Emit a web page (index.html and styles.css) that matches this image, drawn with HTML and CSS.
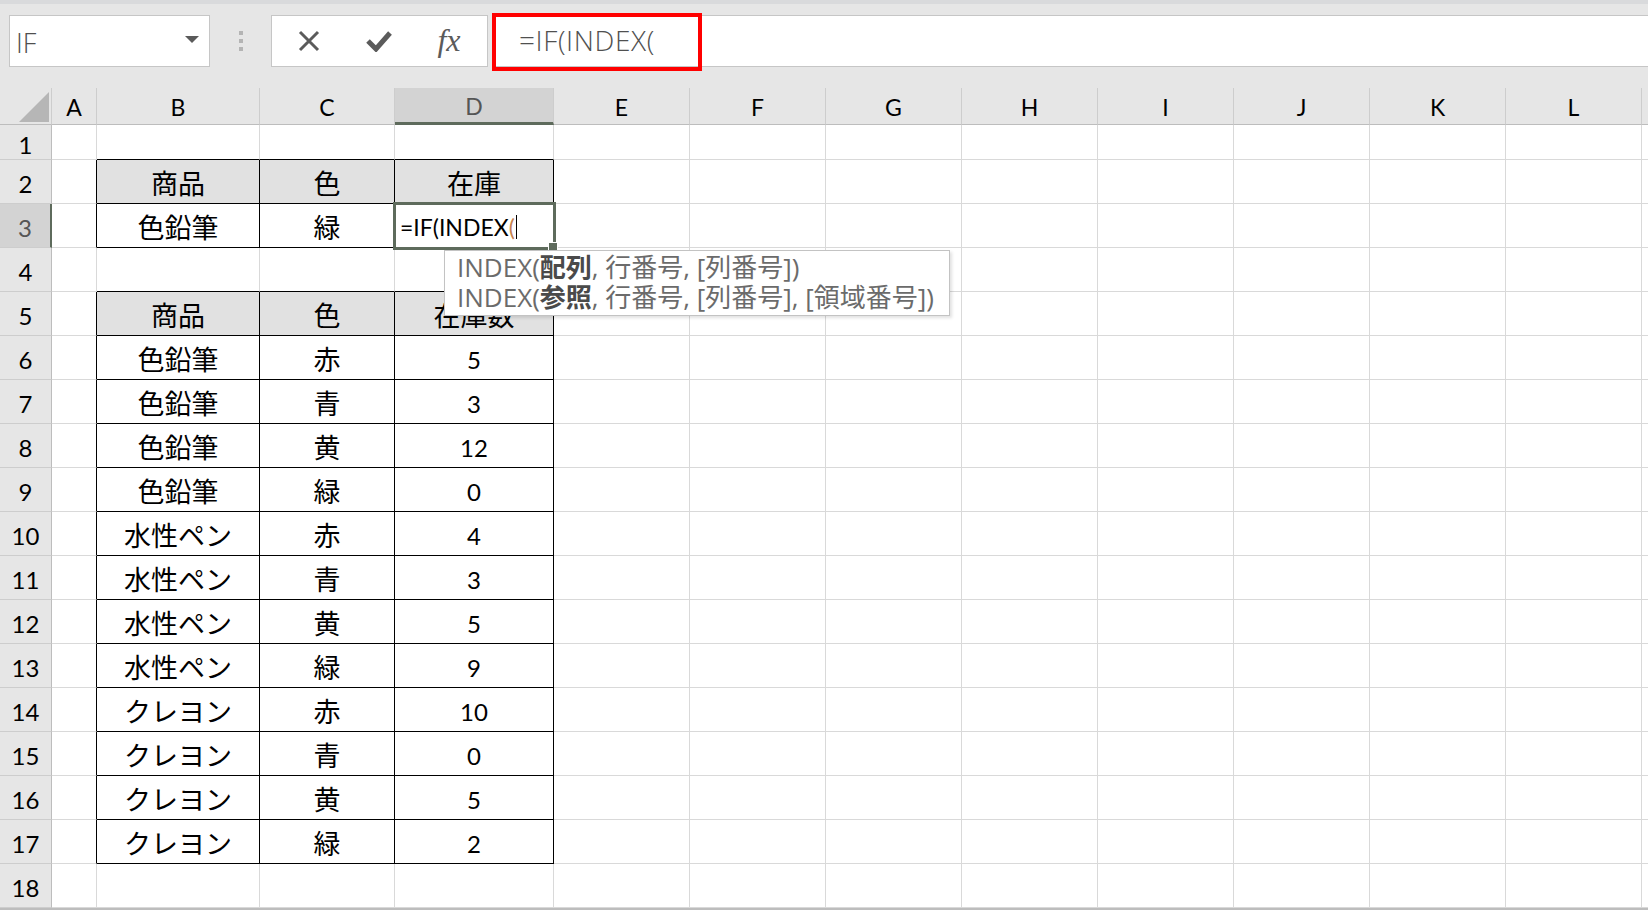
FILE: index.html
```html
<!DOCTYPE html>
<html lang="ja">

<head>
    <meta charset="UTF-8">
    <title>在庫表 - INDEX</title>
    <link rel="stylesheet" href="styles.css">
</head>

<body>
    <div class="top-strip"></div>

    <!-- name box + formula bar -->
    <div class="formula-row">
        <div class="name-box">
            <span>IF</span>
            <span class="arrow"></span>
        </div>
        <div class="grip"><span></span><span></span><span></span></div>
        <div class="fx-buttons">
            <div class="btn">
                <svg width="24" height="22" viewBox="0 0 24 22"><path d="M3 2 L21 20 M21 2 L3 20" stroke="#5b5b5b" stroke-width="3" fill="none"/></svg>
            </div>
            <div class="btn">
                <svg width="28" height="22" viewBox="0 0 28 22"><path d="M3 11 L11 19 L25 3" stroke="#5b5b5b" stroke-width="5" fill="none"/></svg>
            </div>
            <div class="btn fx">fx</div>
        </div>
        <div class="formula-input">
            =IF(INDEX(
            <div class="callout"></div>
        </div>
    </div>

    <!-- sheet grid: row header, A..L, then the cut-off M column -->
    <div class="sheet">
        <div class="hd corner"><svg width="30" height="30" viewBox="0 0 30 30"><path d="M30 0 L30 30 L0 30 Z" fill="#b6b6b6"/></svg></div>
        <div class="hd">A</div><div class="hd">B</div><div class="hd">C</div><div class="hd sel-col">D</div><div class="hd">E</div><div class="hd">F</div><div class="hd">G</div><div class="hd">H</div><div class="hd">I</div><div class="hd">J</div><div class="hd">K</div><div class="hd">L</div><div class="hd last"></div>

        <div class="rn">1</div><div></div><div class="bt"></div><div class="bt"></div><div class="bt"></div><div></div><div></div><div></div><div></div><div></div><div></div><div></div><div></div><div class="last"></div>

        <div class="rn">2</div><div class="bl"></div><div class="k kh jp">商品</div><div class="k kh jp">色</div><div class="k kh jp">在庫</div><div></div><div></div><div></div><div></div><div></div><div></div><div></div><div></div><div class="last"></div>

        <div class="rn sel-row">3</div><div class="bl"></div><div class="k jp">色鉛筆</div><div class="k jp">緑</div><div class="k active">=IF(INDEX<span class="paren">(</span><span class="caret"></span></div><div></div><div></div><div></div><div></div><div></div><div></div><div></div><div></div><div class="last"></div>

        <div class="rn">4</div><div></div><div class="bt"></div><div class="bt"></div><div class="bt"></div><div></div><div></div><div></div><div></div><div></div><div></div><div></div><div></div><div class="last"></div>

        <div class="rn">5</div><div class="bl"></div><div class="k kh jp">商品</div><div class="k kh jp">色</div><div class="k kh jp">在庫数</div><div></div><div></div><div></div><div></div><div></div><div></div><div></div><div></div><div class="last"></div>

        <div class="rn">6</div><div class="bl"></div><div class="k jp">色鉛筆</div><div class="k jp">赤</div><div class="k">5</div><div></div><div></div><div></div><div></div><div></div><div></div><div></div><div></div><div class="last"></div>
        <div class="rn">7</div><div class="bl"></div><div class="k jp">色鉛筆</div><div class="k jp">青</div><div class="k">3</div><div></div><div></div><div></div><div></div><div></div><div></div><div></div><div></div><div class="last"></div>
        <div class="rn">8</div><div class="bl"></div><div class="k jp">色鉛筆</div><div class="k jp">黄</div><div class="k">12</div><div></div><div></div><div></div><div></div><div></div><div></div><div></div><div></div><div class="last"></div>
        <div class="rn">9</div><div class="bl"></div><div class="k jp">色鉛筆</div><div class="k jp">緑</div><div class="k">0</div><div></div><div></div><div></div><div></div><div></div><div></div><div></div><div></div><div class="last"></div>
        <div class="rn">10</div><div class="bl"></div><div class="k jp">水性ペン</div><div class="k jp">赤</div><div class="k">4</div><div></div><div></div><div></div><div></div><div></div><div></div><div></div><div></div><div class="last"></div>
        <div class="rn">11</div><div class="bl"></div><div class="k jp">水性ペン</div><div class="k jp">青</div><div class="k">3</div><div></div><div></div><div></div><div></div><div></div><div></div><div></div><div></div><div class="last"></div>
        <div class="rn">12</div><div class="bl"></div><div class="k jp">水性ペン</div><div class="k jp">黄</div><div class="k">5</div><div></div><div></div><div></div><div></div><div></div><div></div><div></div><div></div><div class="last"></div>
        <div class="rn">13</div><div class="bl"></div><div class="k jp">水性ペン</div><div class="k jp">緑</div><div class="k">9</div><div></div><div></div><div></div><div></div><div></div><div></div><div></div><div></div><div class="last"></div>
        <div class="rn">14</div><div class="bl"></div><div class="k jp">クレヨン</div><div class="k jp">赤</div><div class="k">10</div><div></div><div></div><div></div><div></div><div></div><div></div><div></div><div></div><div class="last"></div>
        <div class="rn">15</div><div class="bl"></div><div class="k jp">クレヨン</div><div class="k jp">青</div><div class="k">0</div><div></div><div></div><div></div><div></div><div></div><div></div><div></div><div></div><div class="last"></div>
        <div class="rn">16</div><div class="bl"></div><div class="k jp">クレヨン</div><div class="k jp">黄</div><div class="k">5</div><div></div><div></div><div></div><div></div><div></div><div></div><div></div><div></div><div class="last"></div>
        <div class="rn">17</div><div class="bl"></div><div class="k jp">クレヨン</div><div class="k jp">緑</div><div class="k">2</div><div></div><div></div><div></div><div></div><div></div><div></div><div></div><div></div><div class="last"></div>

        <div class="rn">18</div><div></div><div></div><div></div><div></div><div></div><div></div><div></div><div></div><div></div><div></div><div></div><div></div><div class="last"></div>

        <!-- function argument hint under the edited cell -->
        <aside class="hint">
            <p>INDEX(<b>配列</b>, 行番号, [列番号])</p>
            <p>INDEX(<b>参照</b>, 行番号, [列番号], [領域番号])</p>
        </aside>
    </div>
</body>

</html>
```

FILE: styles.css
```css
* {
    box-sizing: border-box;
}

html,
body {
    margin: 0;
}

body {
    width: 1648px;
    height: 910px;
    overflow: hidden;
    background-color: #e6e6e6;
    font-family: Lato, "Noto Sans CJK JP", sans-serif;
}

.top-strip {
    height: 4px;
    background-color: #d9dadc;
}

/* formula bar */
.formula-row {
    display: flex;
    align-items: flex-start;
    height: 84px;
    padding: 11px 0 0 9px;
}

.name-box {
    width: 201px;
    height: 52px;
    background-color: #fff;
    border: 1px solid #c6c6c6;
    display: flex;
    align-items: center;
    justify-content: space-between;
    padding: 3px 10px 0 6px;
    font-family: "Open Sans", sans-serif;
    font-weight: 300;
    font-size: 27px;
    color: #4f4f4f;
}

.name-box .arrow {
    width: 0;
    height: 0;
    border-left: 7px solid transparent;
    border-right: 7px solid transparent;
    border-top: 7px solid #5a5a5a;
    margin-bottom: 6px;
}

.grip {
    width: 61px;
    height: 52px;
    display: flex;
    flex-direction: column;
    align-items: center;
    justify-content: center;
    gap: 4px;
}

.grip span {
    width: 4px;
    height: 4px;
    background-color: #b4b4b4;
}

.fx-buttons {
    width: 217px;
    height: 52px;
    background-color: #fff;
    border: 1px solid #c6c6c6;
    display: flex;
    align-items: center;
    padding-left: 2px;
}

.btn {
    width: 70px;
    display: flex;
    justify-content: center;
    align-items: center;
}

.btn.fx {
    font-family: "Liberation Serif", serif;
    font-style: italic;
    font-size: 32px;
    color: #5b5b5b;
    padding-bottom: 2px;
}

.formula-input {
    flex: 1;
    margin-left: 4px;
    height: 52px;
    position: relative;
    background-color: #fff;
    border-top: 1px solid #c6c6c6;
    border-bottom: 1px solid #c6c6c6;
    display: flex;
    align-items: center;
    padding: 0 0 3px 27px;
    font-family: "Open Sans", sans-serif;
    font-weight: 300;
    font-size: 28px;
    letter-spacing: 0.6px;
    color: #505050;
}

.callout {
    position: absolute;
    left: 0;
    top: -3px;
    width: 210px;
    height: 58px;
    border: 4px solid #ff0000;
}

/* sheet */
.sheet {
    position: relative;
    display: grid;
    grid-template-columns: 52px 45px 163px 135px 159px repeat(8, 136px) 1fr;
    grid-template-rows: 37px 35px;
    grid-auto-rows: 44px;
    background-color: #fff;
    border-bottom: 2px solid #bdbdbd;
}

.sheet > div {
    display: flex;
    align-items: center;
    justify-content: center;
    border-right: 1px solid #d9d9d9;
    border-bottom: 1px solid #d9d9d9;
    font-size: 24px;
    color: #000;
    padding-top: 4px;
}

.sheet > .last {
    border-right: none;
}

.sheet > .hd {
    background-color: #e6e6e6;
    border-right-color: #cdcdcd;
    border-bottom-color: #bdbdbd;
    font-size: 23px;
    padding-top: 2px;
}

.sheet > .corner {
    align-items: flex-end;
    justify-content: flex-end;
    padding: 0 2px 2px 0;
}

.sheet > .rn {
    background-color: #e6e6e6;
    border-right-color: #bdbdbd;
    border-bottom-color: #cdcdcd;
}

.sheet > .sel-col {
    background-color: #d3d3d3;
    color: #555;
    border-bottom: 3px solid #5e6b5c;
}

.sheet > .sel-row {
    background-color: #d3d3d3;
    color: #555;
    border-right: 2px solid #5e6b5c;
}

/* table borders */
.sheet > .k {
    border-right-color: #000;
    border-bottom-color: #000;
}

.sheet > .kh {
    background-color: #e1e1e1;
}

.sheet > .bt {
    border-bottom-color: #000;
}

.sheet > .bl {
    border-right-color: #000;
}

.sheet > .jp {
    font-family: "Noto Sans CJK JP", sans-serif;
    font-size: 27px;
    padding-top: 2px;
}

.sheet > .active {
    position: relative;
    z-index: 1;
    justify-content: flex-start;
    padding: 2px 0 0 5px;
    font-size: 23px;
    outline: 3px solid #5e6b5c;
    outline-offset: -1px;
}

.active::after {
    content: "";
    position: absolute;
    right: -5px;
    bottom: -5px;
    width: 8px;
    height: 8px;
    background-color: #5e6b5c;
    border: 1px solid #fff;
}

.active .paren {
    color: #c6834f;
}

.active .caret {
    width: 1px;
    height: 24px;
    margin-left: 1px;
    background-color: #000;
}

.hint {
    position: absolute;
    left: 444px;
    top: 162px;
    width: 506px;
    height: 66px;
    z-index: 2;
    background-color: #fff;
    border: 1px solid #c3c3c3;
    box-shadow: 2px 2px 3px rgba(0, 0, 0, 0.12);
    padding: 1px 12px 0;
    font-family: "Open Sans", "Noto Sans CJK JP", sans-serif;
    font-size: 26px;
    color: #6b6b6b;
}

.hint p {
    margin: 0;
    line-height: 30px;
    white-space: nowrap;
}

.hint b {
    color: #4a4a4a;
}
```
